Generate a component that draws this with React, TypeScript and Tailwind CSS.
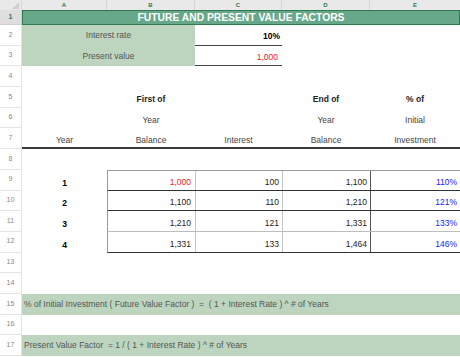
import type { ReactNode } from "react";

const font = { fontFamily: '"Liberation Sans", Arial, sans-serif' };

function RowHead({ n, active = false }: { n: number; active?: boolean }) {
  return (
    <div
      className={
        active
          ? "w-[22px] shrink-0 flex items-center justify-center border-r border-b border-[#cfcfcf] bg-[#dedede] text-[7px] font-bold text-[#2f7a52]"
          : "w-[22px] shrink-0 flex items-center justify-center border-r border-b border-[#e4e4e4] bg-white text-[7px] text-[#888]"
      }
    >
      {n}
    </div>
  );
}

function Row({ n, children, h = "h-[20.7px]" }: { n: number; children?: ReactNode; h?: string }) {
  return (
    <div className={`flex ${h}`}>
      <RowHead n={n} />
      <div className="flex flex-1 min-w-0">{children}</div>
    </div>
  );
}

// column widths: A 85, B 88, C 87, D 88, E rest
function Cell({
  w,
  children,
  className = "",
}: {
  w: "A" | "B" | "C" | "D" | "E";
  children?: ReactNode;
  className?: string;
}) {
  const width =
    w === "A" ? "w-[85px]" : w === "B" ? "w-[88px]" : w === "C" ? "w-[87px]" : w === "D" ? "w-[88px]" : "flex-1";
  return <div className={`${width} shrink-0 flex items-end ${className}`}>{children}</div>;
}

const years = [
  { y: 1, first: "1,000", int: "100", end: "1,100", pct: "110%" },
  { y: 2, first: "1,100", int: "110", end: "1,210", pct: "121%" },
  { y: 3, first: "1,210", int: "121", end: "1,331", pct: "133%" },
  { y: 4, first: "1,331", int: "133", end: "1,464", pct: "146%" },
];

export default function App() {
  return (
    <div className="w-[460px] h-[357px] overflow-hidden bg-white text-[8.5px] text-[#222]" style={font}>
      {/* column letters */}
      <div className="flex h-[10px] bg-[#e9e9e9] text-[6px] font-bold text-[#2f7a52]">
        <div className="w-[22px] shrink-0 border-r border-[#d6d6d6] relative">
          <div className="absolute right-[2px] bottom-[1px] w-0 h-0 border-l-[7px] border-l-transparent border-b-[7px] border-b-[#d0d0d0]" />
        </div>
        {["A", "B", "C", "D"].map((c, i) => (
          <div
            key={c}
            className={`${["w-[85px]", "w-[88px]", "w-[87px]", "w-[88px]"][i]} shrink-0 flex items-center justify-center border-r border-[#d6d6d6]`}
          >
            {c}
          </div>
        ))}
        <div className="flex-1 flex items-center justify-center">E</div>
      </div>

      {/* row 1 title */}
      <div className="flex h-[15px]">
        <RowHead n={1} active />
        <div className="flex-1 flex items-center justify-center bg-[#67a88a] border-[1.5px] border-[#2f7a52] text-[10.3px] font-bold text-white">
          FUTURE AND PRESENT VALUE FACTORS
        </div>
      </div>

      {/* rows 2-3 inputs */}
      <Row n={2}>
        <div className="w-[173px] shrink-0 flex items-center justify-center bg-[#bdd5bf] text-[#555]">Interest rate</div>
        <Cell w="C" className="justify-end pb-[2px] pr-[2px] border-b border-[#444] font-bold text-black">
          10%
        </Cell>
      </Row>
      <Row n={3}>
        <div className="w-[173px] shrink-0 flex items-center justify-center bg-[#bdd5bf] text-[#555]">Present value</div>
        <Cell w="C" className="justify-end pb-[2px] pr-[4px] border-b border-[#444] text-[#f01c1c]">
          1,000
        </Cell>
      </Row>
      <Row n={4} />

      {/* headers */}
      <Row n={5}>
        <Cell w="A" />
        <Cell w="B" className="justify-center pb-[2px] font-bold">First of</Cell>
        <Cell w="C" />
        <Cell w="D" className="justify-center pb-[2px] font-bold">End of</Cell>
        <Cell w="E" className="justify-center pb-[2px] font-bold">% of</Cell>
      </Row>
      <Row n={6}>
        <Cell w="A" />
        <Cell w="B" className="justify-center pb-[2px] text-[#444]">Year</Cell>
        <Cell w="C" />
        <Cell w="D" className="justify-center pb-[2px] text-[#444]">Year</Cell>
        <Cell w="E" className="justify-center pb-[2px] text-[#444]">Initial</Cell>
      </Row>
      <Row n={7}>
        <div className="flex flex-1 border-b-2 border-[#3a3a3a] text-[#444]">
          <Cell w="A" className="justify-center">Year</Cell>
          <Cell w="B" className="justify-center">Balance</Cell>
          <Cell w="C" className="justify-center">Interest</Cell>
          <Cell w="D" className="justify-center">Balance</Cell>
          <Cell w="E" className="justify-center">Investment</Cell>
        </div>
      </Row>
      <Row n={8} />

      {/* data rows */}
      {years.map((r, i) => (
        <Row key={r.y} n={9 + i}>
          <Cell w="A" className="justify-center pb-[1px] font-bold text-black">{r.y}</Cell>
          <div
            className={`flex flex-1 border-l border-[#9a9a9a] ${i === 0 ? "border-t border-t-[#9a9a9a]" : ""} ${
              i === 2 ? "border-b border-b-[#bdbdbd]" : "border-b border-b-[#333]"
            }`}
          >
            <Cell w="B" className={`justify-end pb-[1px] pr-[4px] border-r border-[#c4c4c4] ${i === 0 ? "text-[#f01c1c]" : ""}`}>
              {r.first}
            </Cell>
            <Cell w="C" className="justify-end pb-[1px] pr-[3px] border-r border-[#c4c4c4]">{r.int}</Cell>
            <Cell w="D" className="justify-end pb-[1px] pr-[3px] border-r border-[#555]">{r.end}</Cell>
            <Cell w="E" className="justify-end pb-[1px] pr-[3px] text-[#2323f0]">{r.pct}</Cell>
          </div>
        </Row>
      ))}

      <Row n={13} />
      <Row n={14} />
      <Row n={15}>
        <div className="flex-1 flex items-center pl-[2px] bg-[#bdd5bf] text-[#555]">
          % of Initial Investment ( Future Value Factor ) &nbsp;= &nbsp;( 1 + Interest Rate ) ^ # of Years
        </div>
      </Row>
      <Row n={16} />
      <Row n={17}>
        <div className="flex-1 flex items-center pl-[2px] bg-[#bdd5bf] text-[#555]">
          Present Value Factor &nbsp;= 1 / ( 1 + Interest Rate ) ^ # of Years
        </div>
      </Row>
    </div>
  );
}
